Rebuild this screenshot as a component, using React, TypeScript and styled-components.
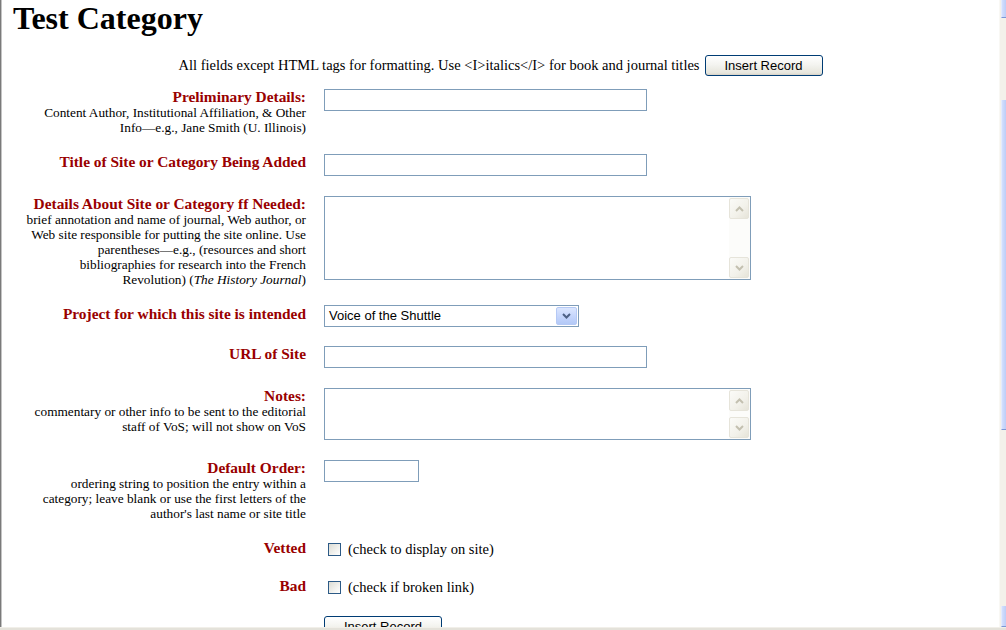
import React from "react";
import styled, { createGlobalStyle } from "styled-components";

const Global = createGlobalStyle`
  html, body { margin: 0; padding: 0; background: #fff; overflow: hidden; }
  body { font-family: "Liberation Serif", "Times New Roman", serif; color: #000; }
`;

const Window = styled.div`
  width: 1006px;
  height: 630px;
  display: flex;
  flex-direction: column;
  overflow: hidden;
`;

const Body = styled.div`
  flex: 1;
  min-height: 0;
  display: flex;
`;

const Page = styled.div`
  flex: 1;
  min-width: 0;
  border-left: 1px solid #7a7a7a;
  box-shadow: inset 1px 0 0 #c4c4c4;
  padding-left: 1px;
  overflow: hidden;
`;

const Title = styled.h1`
  margin: 0;
  padding-left: 11px;
  font-family: "Liberation Serif", "Times New Roman", serif;
  font-size: 32px;
  font-weight: bold;
  line-height: 37px;
`;

const Instructions = styled.div`
  margin-top: 17px;
  height: 23px;
  display: flex;
  align-items: center;
  justify-content: center;
  gap: 5px;
  font-size: 14.5px;
`;

const XPButton = styled.button`
  width: 118px;
  height: 21px;
  padding: 0;
  border: 1px solid #003c74;
  border-radius: 3px;
  background: linear-gradient(#ffffff 0%, #f4f4f0 45%, #e6e5dc 90%, #d6d0c5 100%);
  font-family: "Liberation Sans", Arial, sans-serif;
  font-size: 13px;
  color: #000;
  line-height: 19px;
`;

const Form = styled.div`
  margin-top: 11px;
  margin-left: 11px;
  display: grid;
  grid-template-columns: 293px auto;
  column-gap: 18px;
  row-gap: 18px;
  align-items: start;
  justify-content: start;
`;

const LabelCell = styled.div`
  text-align: right;
`;

const Name = styled.div`
  font-size: 15.4px;
  font-weight: bold;
  color: #990000;
  line-height: 17px;
`;

const Desc = styled.div`
  font-size: 13.3px;
  line-height: 15px;
  color: #000;
`;

const FieldCell = styled.div<{ $flush?: boolean }>`
  padding: ${(p) => (p.$flush ? "0" : "1px 0")};
  display: flex;
  align-items: center;
`;

const CheckCell = styled.div`
  height: 20px;
  padding-left: 4px;
  display: flex;
  align-items: center;
  gap: 7px;
  font-size: 14.5px;
`;

const TextInput = styled.input<{ $w: number }>`
  box-sizing: border-box;
  width: ${(p) => p.$w}px;
  height: 22px;
  margin: 0;
  border: 1px solid #7f9db9;
  background: #fff;
  outline: none;
  padding: 0 3px;
  font-family: "Liberation Sans", Arial, sans-serif;
  font-size: 13px;
`;

const AreaBox = styled.div<{ $h: number }>`
  box-sizing: border-box;
  width: 427px;
  height: ${(p) => p.$h}px;
  border: 1px solid #7f9db9;
  background: #fff;
  display: flex;
`;

const Area = styled.textarea`
  flex: 1;
  border: none;
  outline: none;
  resize: none;
  margin: 0;
  padding: 2px;
  background: transparent;
  font-family: "Liberation Mono", monospace;
  font-size: 13px;
  overflow: hidden;
`;

const AreaScroll = styled.div`
  width: 21px;
  box-sizing: border-box;
  padding: 1px 1px 1px 0;
  display: flex;
  flex-direction: column;
  justify-content: space-between;
  background: #fcfcfa;
`;

const ScrollBtn = styled.div`
  box-sizing: border-box;
  height: 21px;
  border: 1px solid #e6e4da;
  border-radius: 2px;
  background: linear-gradient(135deg, #fbfbf8 0%, #f2f1ea 60%, #e6e4d9 100%);
  display: flex;
  align-items: center;
  justify-content: center;
`;

const SelectBox = styled.div`
  box-sizing: border-box;
  width: 255px;
  height: 22px;
  border: 1px solid #7f9db9;
  background: #fff;
  display: flex;
  align-items: center;
  padding: 1px;
`;

const SelectText = styled.span`
  flex: 1;
  padding-left: 3px;
  font-family: "Liberation Sans", Arial, sans-serif;
  font-size: 13px;
  line-height: 18px;
`;

const DropBtn = styled.div`
  box-sizing: border-box;
  width: 21px;
  height: 18px;
  border: 1px solid #b5c9f5;
  border-radius: 2px;
  background: linear-gradient(#dbe6fe 0%, #c6d6fc 50%, #b3c9f7 100%);
  display: flex;
  align-items: center;
  justify-content: center;
`;

const CheckBox = styled.span`
  box-sizing: border-box;
  width: 13px;
  height: 13px;
  border: 1px solid #2c5a86;
  background: linear-gradient(135deg, #dcdcd4 0%, #f0f0ec 55%, #ffffff 100%);
`;

const VScroll = styled.div`
  width: 7px;
  display: flex;
  flex-direction: column;
  background: #f3f1ea;
  border-left: 1px solid #f9f8f4;
  box-sizing: border-box;
`;

const VBtn = styled.div<{ $h: number }>`
  height: ${(p) => p.$h}px;
  margin-left: 1px;
  background: linear-gradient(90deg, #d4e0fd, #bccdf8);
  border-bottom: 1px solid #7b96d6;
  border-left: 1px solid #e4ebfd;
  box-sizing: border-box;
`;

const VTrack = styled.div`
  flex: 1;
  display: flex;
  flex-direction: column;
`;

const VGap = styled.div<{ $h: number }>`
  height: ${(p) => p.$h}px;
`;

const BottomEdge = styled.div`
  height: 2px;
  background: #e4e2da;
  border-top: 1px solid #f1efe9;
`;

const ChevUp = ({ color = "#c3c0b0" }: { color?: string }) => (
  <svg width="9" height="6" viewBox="0 0 9 6">
    <polyline points="1,5 4.5,1.5 8,5" fill="none" stroke={color} strokeWidth="2" />
  </svg>
);

const ChevDown = ({ color = "#c3c0b0" }: { color?: string }) => (
  <svg width="9" height="6" viewBox="0 0 9 6">
    <polyline points="1,1 4.5,4.5 8,1" fill="none" stroke={color} strokeWidth="2" />
  </svg>
);

const TextArea = ({ h }: { h: number }) => (
  <AreaBox $h={h}>
    <Area />
    <AreaScroll>
      <ScrollBtn>
        <ChevUp />
      </ScrollBtn>
      <ScrollBtn>
        <ChevDown />
      </ScrollBtn>
    </AreaScroll>
  </AreaBox>
);

export default function App() {
  return (
    <Window>
      <Global />
      <Body>
        <Page>
          <Title>Test Category</Title>
          <Instructions>
            <span>All fields except HTML tags for formatting. Use &lt;I&gt;italics&lt;/I&gt; for book and journal titles</span>
            <XPButton>Insert Record</XPButton>
          </Instructions>
          <Form>
            <LabelCell>
              <Name>Preliminary Details:</Name>
              <Desc>
                Content Author, Institutional Affiliation, &amp; Other
                <br />
                Info—e.g., Jane Smith (U. Illinois)
              </Desc>
            </LabelCell>
            <FieldCell>
              <TextInput $w={323} />
            </FieldCell>

            <LabelCell>
              <Name>Title of Site or Category Being Added</Name>
            </LabelCell>
            <FieldCell>
              <TextInput $w={323} />
            </FieldCell>

            <LabelCell>
              <Name>Details About Site or Category ff Needed:</Name>
              <Desc>
                brief annotation and name of journal, Web author, or
                <br />
                Web site responsible for putting the site online. Use
                <br />
                parentheses—e.g., (resources and short
                <br />
                bibliographies for research into the French
                <br />
                Revolution) (<i>The History Journal</i>)
              </Desc>
            </LabelCell>
            <FieldCell>
              <TextArea h={84} />
            </FieldCell>

            <LabelCell>
              <Name>Project for which this site is intended</Name>
            </LabelCell>
            <FieldCell $flush>
              <SelectBox>
                <SelectText>Voice of the Shuttle</SelectText>
                <DropBtn>
                  <ChevDown color="#4d6185" />
                </DropBtn>
              </SelectBox>
            </FieldCell>

            <LabelCell>
              <Name>URL of Site</Name>
            </LabelCell>
            <FieldCell>
              <TextInput $w={323} />
            </FieldCell>

            <LabelCell>
              <Name>Notes:</Name>
              <Desc>
                commentary or other info to be sent to the editorial
                <br />
                staff of VoS; will not show on VoS
              </Desc>
            </LabelCell>
            <FieldCell>
              <TextArea h={52} />
            </FieldCell>

            <LabelCell>
              <Name>Default Order:</Name>
              <Desc>
                ordering string to position the entry within a
                <br />
                category; leave blank or use the first letters of the
                <br />
                author's last name or site title
              </Desc>
            </LabelCell>
            <FieldCell>
              <TextInput $w={95} />
            </FieldCell>

            <LabelCell>
              <Name>Vetted</Name>
            </LabelCell>
            <CheckCell>
              <CheckBox />
              <span>(check to display on site)</span>
            </CheckCell>

            <LabelCell>
              <Name>Bad</Name>
            </LabelCell>
            <CheckCell>
              <CheckBox />
              <span>(check if broken link)</span>
            </CheckCell>

            <LabelCell />
            <FieldCell>
              <XPButton>Insert Record</XPButton>
            </FieldCell>
          </Form>
        </Page>
        <VScroll>
          <VBtn $h={18} />
          <VTrack>
            <VGap $h={82} />
            <VBtn $h={330} />
          </VTrack>
          <VBtn $h={21} />
        </VScroll>
      </Body>
      <BottomEdge />
    </Window>
  );
}
